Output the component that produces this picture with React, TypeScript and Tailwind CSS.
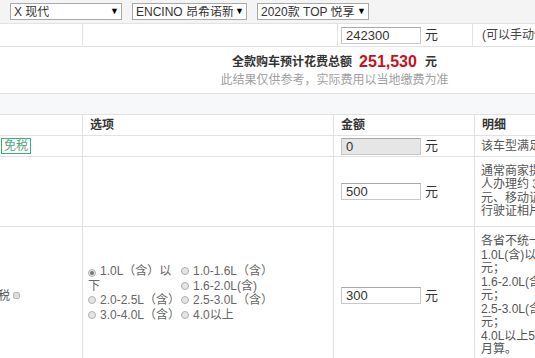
import type { ReactNode } from "react"

const font = "font-['Liberation_Sans','Noto_Sans_CJK_SC',sans-serif]"

const selects = [
  { label: "X 现代", width: "w-[112px]" },
  { label: "ENCINO 昂希诺新能源", width: "w-[115px]" },
  { label: "2020款 TOP 悦享", width: "w-[112px]" },
]

const cols = "grid grid-cols-[83px_251px_141px_194px]"

function Select({ label, width }: { label: string; width: string }) {
  return (
    <div
      className={`${width} h-[17px] border border-[#a9a9a9] bg-white flex items-center justify-between pl-[3px] pr-[2px] text-[12px] text-[#333] overflow-hidden`}
    >
      <span className="whitespace-nowrap overflow-hidden leading-none">{label}</span>
      <span className="text-[9px] text-black leading-none pl-[2px] bg-white">▼</span>
    </div>
  )
}

function Input({ value, disabled }: { value: string; disabled?: boolean }) {
  return (
    <div
      className={`w-[80px] h-[17px] border border-[#c8c8c8] border-t-[#a8a8a8] pl-[4px] text-[13px] leading-[15px] text-[#333] ${
        disabled ? "bg-[#e6e6e6]" : "bg-white"
      }`}
    >
      {value}
    </div>
  )
}

function Radio({ checked, wrap, children }: { checked?: boolean; wrap?: boolean; children: ReactNode }) {
  return (
    <div className={wrap ? "" : "whitespace-nowrap"}>
      <span className="inline-flex items-center justify-center w-[8px] h-[8px] rounded-full border border-[#b0b0b0] bg-[#e4e4e4] mr-[4px] align-[0px]">
        {checked && <span className="w-[4px] h-[4px] rounded-full bg-[#777]" />}
      </span>
      {children}
    </div>
  )
}

function Cell({ children, className = "" }: { children?: ReactNode; className?: string }) {
  return <div className={`border-r border-[#e2e2e2] ${className}`}>{children}</div>
}

export default function App() {
  return (
    <div className={`w-[535px] h-[358px] overflow-hidden bg-white ${font}`}>
      <div className="w-[669px]">
        {/* car selectors */}
        <div className="h-[24px] bg-[#f4f4f4] border-b border-[#e2e2e2] flex items-center pl-[10px] gap-[10px]">
          {selects.map((s) => (
            <Select key={s.label} label={s.label} width={s.width} />
          ))}
        </div>

        {/* price row */}
        <div className="grid grid-cols-[83px_255px_135px_196px] h-[23px] border-b border-[#e2e2e2] text-[12px] text-[#444]">
          <Cell />
          <Cell />
          <Cell className="flex items-center pl-[3px]">
            <Input value="242300" />
            <span className="ml-[4px] text-[13px] text-[#333]">元</span>
          </Cell>
          <div className="flex items-center pl-[9px] whitespace-nowrap">(可以手动修改)</div>
        </div>

        {/* total */}
        <div className="h-[47px] border-b border-[#e2e2e2] pt-[5px] text-center">
          <div className="h-[20px] flex items-center justify-center">
            <span className="text-[12px] font-bold text-[#333]">全款购车预计花费总额</span>
            <span className="ml-[7px] text-[16px] font-bold text-[#c8101a]">251,530</span>
            <span className="ml-[8px] text-[12px] font-bold text-[#333]">元</span>
          </div>
          <div className="text-[12px] leading-[16px] text-[#a0a0a0]">此结果仅供参考，实际费用以当地缴费为准</div>
        </div>

        {/* section band */}
        <div className="h-[21px] bg-[#f7f8fa] border-b border-[#e2e2e2]" />

        {/* table header */}
        <div className={`${cols} h-[21px] border-b border-[#e2e2e2] text-[12px] font-bold text-[#333]`}>
          <Cell />
          <Cell className="flex items-center pl-[7px]">选项</Cell>
          <Cell className="flex items-center pl-[7px]">金额</Cell>
          <div className="flex items-center pl-[7px]">明细</div>
        </div>

        {/* purchase tax */}
        <div className={`${cols} h-[21px] border-b border-[#e2e2e2] text-[12px] text-[#555]`}>
          <Cell className="flex items-center overflow-hidden">
            <div className="-ml-[39px] flex items-center gap-[4px] whitespace-nowrap">
              <span>购置税</span>
              <span className="border border-[#3fae7e] text-[#52a57f] px-[2px] leading-[14px]">免税</span>
            </div>
          </Cell>
          <Cell />
          <Cell className="flex items-center pl-[7px]">
            <Input value="0" disabled />
            <span className="ml-[4px] text-[13px] text-[#333]">元</span>
          </Cell>
          <div className="flex items-center pl-[6px] whitespace-nowrap">该车型满足免征购置税条件</div>
        </div>

        {/* licence fee */}
        <div className={`${cols} h-[70px] border-b border-[#e2e2e2] text-[12px] text-[#555]`}>
          <Cell className="overflow-hidden" />
          <Cell />
          <Cell className="flex items-center pl-[7px]">
            <Input value="500" />
            <span className="ml-[4px] text-[13px] text-[#333]">元</span>
          </Cell>
          <div className="flex flex-col justify-center pl-[6px] leading-[13.5px] whitespace-nowrap">
            <div>通常商家提供的上牌服务，个</div>
            <div>人办理约 373</div>
            <div>元、移动证、拓印费及</div>
            <div>行驶证相片等费用。</div>
          </div>
        </div>

        {/* vehicle and vessel tax */}
        <div className={`${cols} text-[12px] text-[#555]`}>
          <Cell className="flex items-center overflow-hidden">
            <div className="-ml-[50px] flex items-center whitespace-nowrap">
              <span>车船使用税</span>
              <span className="ml-[3px] w-[7px] h-[7px] rounded-[2px] border border-[#bbb] bg-[#ddd]" />
            </div>
          </Cell>
          <Cell className="flex items-center pl-[5px] pb-[5px] text-[#666] leading-[14.5px]">
            <div className="flex">
              <div className="w-[93px]">
                <Radio checked wrap>
                  1.0L（含）以下
                </Radio>
                <Radio>2.0-2.5L（含）</Radio>
                <Radio>3.0-4.0L（含）</Radio>
              </div>
              <div>
                <Radio>1.0-1.6L（含）</Radio>
                <Radio>1.6-2.0L(含)</Radio>
                <Radio>2.5-3.0L（含）</Radio>
                <Radio>4.0以上</Radio>
              </div>
            </div>
          </Cell>
          <Cell className="flex items-center pl-[7px]">
            <Input value="300" />
            <span className="ml-[4px] text-[13px] text-[#333]">元</span>
          </Cell>
          <div className="py-[8px] pl-[6px] leading-[13.5px] whitespace-nowrap">
            <div>各省不统一，以北京为例：</div>
            <div>1.0L(含)以下300</div>
            <div>元；</div>
            <div>1.6-2.0L(含)420</div>
            <div>元；</div>
            <div>2.5-3.0L(含)900</div>
            <div>元；</div>
            <div>4.0L以上5280元，按</div>
            <div>月算。</div>
          </div>
        </div>
      </div>
    </div>
  )
}
